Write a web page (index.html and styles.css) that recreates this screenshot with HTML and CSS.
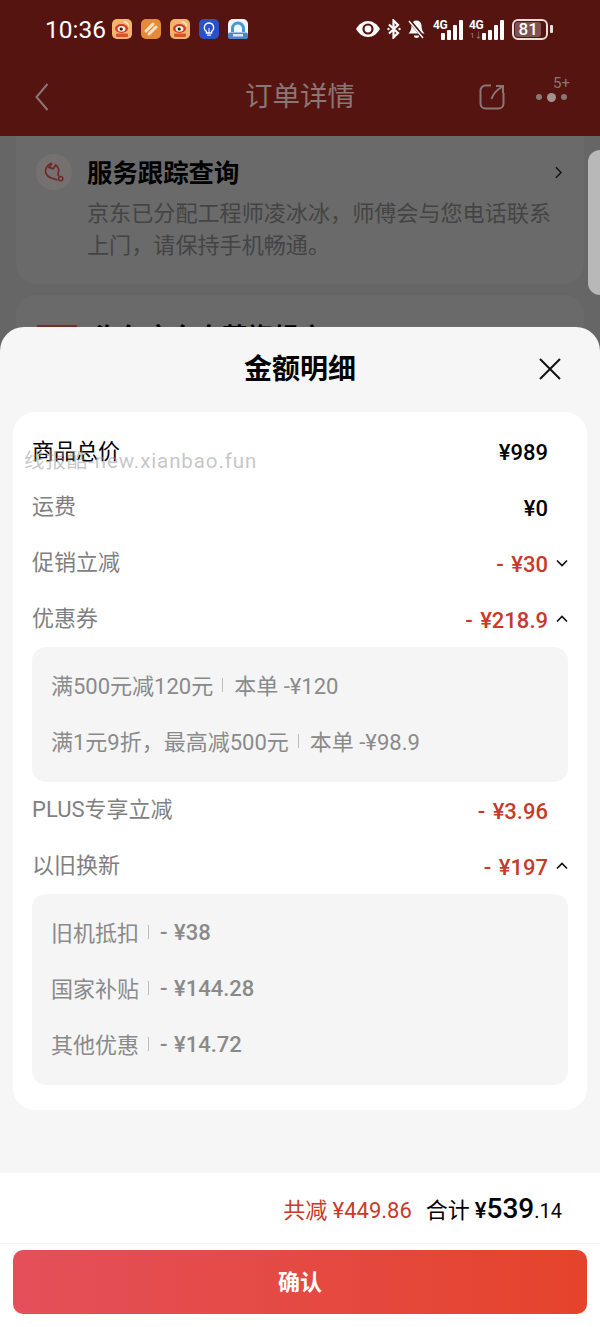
FILE: index.html
```html
<!DOCTYPE html>
<html lang="zh">
<head>
<meta charset="utf-8">
<title>金额明细</title>
<link rel="stylesheet" href="styles.css">
</head>
<body>
<div class="page">
  <header class="topbar">
    <div class="status">
      <span class="time">10:36</span>
      <div class="apps">
        <svg class="app" viewBox="0 0 20 20"><rect width="20" height="20" rx="5" fill="#f3b56c"/><rect x="4" y="14.500" width="12" height="3.500" rx="1" fill="#d9532a"/><ellipse cx="9.500" cy="9.500" rx="6.500" ry="4.400" fill="#d8382a"/><ellipse cx="9.500" cy="9.800" rx="4" ry="2.900" fill="#fbeedd"/><circle cx="9.200" cy="10" r="1.600" fill="#2a1a14"/><path d="M12 3a4.500 4.500 0 0 1 4.500 4.500" fill="none" stroke="#fff3c8" stroke-width="1.300"/></svg>
        <svg class="app" viewBox="0 0 20 20"><rect width="20" height="20" rx="5" fill="#e58a38"/><path d="M5 12 12 5M8 15l7-7" stroke="#fbe3c4" stroke-width="3" stroke-linecap="round" fill="none"/></svg>
        <svg class="app" viewBox="0 0 20 20"><rect width="20" height="20" rx="5" fill="#f3b56c"/><rect x="4" y="14.500" width="12" height="3.500" rx="1" fill="#d9532a"/><ellipse cx="9.500" cy="9.500" rx="6.500" ry="4.400" fill="#d8382a"/><ellipse cx="9.500" cy="9.800" rx="4" ry="2.900" fill="#fbeedd"/><circle cx="9.200" cy="10" r="1.600" fill="#2a1a14"/><path d="M12 3a4.500 4.500 0 0 1 4.500 4.500" fill="none" stroke="#fff3c8" stroke-width="1.300"/></svg>
        <svg class="app" viewBox="0 0 20 20"><rect width="20" height="20" rx="5" fill="#2a52c8"/><path d="M10 4a4.600 4.600 0 0 0-2.600 8.400V14h5.200v-1.600A4.600 4.600 0 0 0 10 4ZM8 16.200h4" fill="none" stroke="#fff" stroke-width="1.300"/><path d="M10 9v5" stroke="#fff" stroke-width="1"/></svg>
        <svg class="app" viewBox="0 0 20 20"><rect width="20" height="20" rx="5" fill="#f2f6fa"/><rect y="13.500" width="20" height="6.500" rx="2" fill="#4f86c8"/><path d="M4.500 13V9.500a5.500 5.500 0 0 1 11 0V13" fill="none" stroke="#3f9ad8" stroke-width="3"/><rect x="5" y="15" width="10" height="2.500" fill="#dbe8f5"/></svg>
      </div>
      <div class="sys">
        <svg class="eye" viewBox="0 0 26 18"><path d="M1 9c3-5 7-8 12-8s9 3 12 8c-3 5-7 8-12 8S4 14 1 9Z" fill="#fff"/><circle cx="13" cy="9" r="5.600" fill="#561410"/><circle cx="13" cy="9" r="3.400" fill="#fff"/></svg>
        <svg class="bt" viewBox="0 0 14 20"><path d="M2 5.500 11 14l-4.500 4.500v-17L11 6l-9 8.500" fill="none" stroke="#fff" stroke-width="2.200"/><circle cx="1.500" cy="10" r="1.200" fill="#fff"/><circle cx="12.500" cy="10" r="1.200" fill="#fff"/></svg>
        <svg class="bell" viewBox="0 0 17 20"><path d="M8.500 1.500a5 5 0 0 0-5 5c0 4-1 6-3 8h16c-2-2-3-4-3-8a5 5 0 0 0-5-5Z" fill="#fff"/><path d="M6 16.500h5a2.500 2.500 0 0 1-5 0Z" fill="#fff"/><path d="M1.500 1.500 15.500 18.500" stroke="#561410" stroke-width="3.500"/><path d="M1 2 15 19" stroke="#fff" stroke-width="1.500"/></svg>
        <div class="net">
          <span class="net-label">4G</span>
          <div class="bars"><i class="b1"></i><i class="b2"></i><i class="b3"></i><i class="b4"></i></div>
        </div>
        <div class="net net-second">
          <span class="net-label">4G</span>
          <span class="net-sim">1↓</span>
          <div class="bars"><i class="b1"></i><i class="b2"></i><i class="b3"></i><i class="b4"></i></div>
        </div>
        <div class="battery"><span class="level">81</span></div>
        <span class="nub"></span>
      </div>
    </div>
    <nav class="nav">
      <svg class="back" viewBox="0 0 14 28"><path d="M12.500 1 1.500 14l11 13" fill="none" stroke="#8a7775" stroke-width="2"/></svg>
      <h1 class="nav-title">订单详情</h1>
      <svg class="share" viewBox="0 0 26 26"><path d="M12 1.500H6.500a5 5 0 0 0-5 5v13a5 5 0 0 0 5 5h13a5 5 0 0 0 5-5V9" fill="none" stroke="#8a7775" stroke-width="2"/><path d="M12.500 15c1.500-5 5-9 11-12.500M17 2h7v7" fill="none" stroke="#8a7775" stroke-width="2"/></svg>
      <div class="more">
        <span class="dot"></span><span class="dot dot-big"></span><span class="dot"></span>
        <span class="more-badge">5+</span>
      </div>
    </nav>
  </header>

  <section class="behind">
    <div class="bg-card">
      <div class="bg-head">
        <span class="bg-icon">
          <svg viewBox="0 0 24 24"><path d="M9.600 1.500C4 2.500.500 9 2.500 14c1 2.500 3 4 5.500 5l8 2.500M18 17c-2-2-1-3-.500-5.500.500-3-1-6-3.500-8L11 8 6 6.500l3.600-5" fill="none" stroke="#6e2a26" stroke-width="2"/><circle cx="20" cy="20" r="2.500" fill="none" stroke="#6e2a26" stroke-width="1.800"/></svg>
        </span>
        <span class="bg-title">服务跟踪查询</span>
        <svg class="bg-arrow" viewBox="0 0 8 14"><path d="M1 1l6 6-6 6" fill="none" stroke="#111" stroke-width="1.600"/></svg>
      </div>
      <p class="bg-desc">京东已分配工程师凌冰冰，师傅会与您电话联系上门，请保持手机畅通。</p>
    </div>
    <div class="bg-card bg-card-two">
      <span class="shop-logo"></span>
      <span class="bg-title shop-name">海尔京东自营旗舰店</span>
    </div>
    <span class="side-tab"></span>
  </section>

  <section class="sheet">
    <div class="sheet-head">
      <h2 class="sheet-title">金额明细</h2>
      <svg class="close" viewBox="0 0 22 22"><path d="M1 1l20 20M21 1 1 21" stroke="#111" stroke-width="2" fill="none"/></svg>
    </div>
    <div class="detail">
      <div class="row"><span class="label label-dark">商品总价</span><span class="val val-dark">¥989</span><span class="slot"></span></div>
      <div class="row"><span class="label">运费</span><span class="val val-dark">¥0</span><span class="slot"></span></div>
      <div class="row"><span class="label">促销立减</span><span class="val val-red">- ¥30</span><span class="slot"><svg class="chev" viewBox="0 0 12 8"><path d="M1 1.500l5 5 5-5" fill="none" stroke="#111" stroke-width="1.700"/></svg></span></div>
      <div class="row"><span class="label">优惠券</span><span class="val val-red">- ¥218.9</span><span class="slot"><svg class="chev" viewBox="0 0 12 8"><path d="M1 6.500l5-5 5 5" fill="none" stroke="#111" stroke-width="1.700"/></svg></span></div>
      <div class="panel panel-two">
        <div class="sub"><span>满500元减120元</span><i class="sep"></i><span>本单 -¥120</span></div>
        <div class="sub"><span>满1元9折，最高减500元</span><i class="sep"></i><span>本单 -¥98.9</span></div>
      </div>
      <div class="row"><span class="label">PLUS专享立减</span><span class="val val-red">- ¥3.96</span><span class="slot"></span></div>
      <div class="row"><span class="label">以旧换新</span><span class="val val-red">- ¥197</span><span class="slot"><svg class="chev" viewBox="0 0 12 8"><path d="M1 6.500l5-5 5 5" fill="none" stroke="#111" stroke-width="1.700"/></svg></span></div>
      <div class="panel panel-three">
        <div class="sub"><span>旧机抵扣</span><i class="sep"></i><span class="amt">- ¥38</span></div>
        <div class="sub"><span>国家补贴</span><i class="sep"></i><span class="amt">- ¥144.28</span></div>
        <div class="sub"><span>其他优惠</span><i class="sep"></i><span class="amt">- ¥14.72</span></div>
      </div>
    </div>
    <footer class="foot">
      <div class="sum">
        <span class="sum-red">共减 ¥449.86</span>
        <span class="sum-total">合计 <span class="yen">¥</span><b class="int">539</b><span class="dec">.14</span></span>
      </div>
      <div class="action"><button class="confirm" type="button">确认</button></div>
    </footer>
  </section>
  <span class="watermark">线报酷-new.xianbao.fun</span>
</div>
</body>
</html>
```
FILE: styles.css
```css
* { box-sizing: border-box; }
html, body { margin: 0; padding: 0; }
body { font-family: Roboto, "Noto Sans CJK SC", sans-serif; }
.page { position: relative; width: 600px; height: 1327px; overflow: hidden; background: #666; }

.topbar { height: 136px; background: #561410; display: flex; flex-direction: column; }
.status { height: 58px; display: flex; align-items: center; padding: 0 47px 0 45px; color: #fff; }
.time { font-size: 24.500px; width: 67px; }
.apps { display: flex; gap: 9px; }
.app { width: 20px; height: 20px; display: block; }
.sys { margin-left: auto; display: flex; align-items: center; }
.eye { width: 26px; height: 18px; margin-right: 6px; }
.bt { width: 14px; height: 20px; margin-right: 7px; }
.bell { width: 17px; height: 20px; margin-right: 8px; }
.net { width: 30px; height: 21px; position: relative; margin-right: 6px; }
.net-second { width: 35px; margin-right: 8px; }
.net-label { position: absolute; left: 0; top: 0; font-size: 12px; line-height: 12px; font-weight: 700; letter-spacing: -.5px; }
.net-sim { position: absolute; left: 1px; bottom: 0; font-size: 8px; line-height: 8px; color: #a8807c; }
.bars { position: absolute; right: 0; bottom: 0; display: flex; align-items: flex-end; gap: 2px; }
.bars i { display: block; width: 4px; background: #fff; border-radius: 1px; }
.bars .b1 { height: 7px; }
.bars .b2 { height: 10px; }
.bars .b3 { height: 15px; }
.bars .b4 { height: 20px; }
.battery { width: 36px; height: 21px; border: 2px solid #e9dcda; border-radius: 6px; padding: 1px; }
.level { display: block; height: 100%; width: 88%; background: #7c5452; border-radius: 3px; font-size: 17px; line-height: 15px; font-weight: 500; text-align: center; color: #fff; }
.nub { width: 3px; height: 8px; background: #e9dcda; margin-left: 2px; border-radius: 1px; }

.nav { flex: 1; position: relative; display: flex; align-items: center; padding: 0 33px 0 35px; }
.back { width: 14px; height: 28px; }
.nav-title { position: absolute; left: 0; right: 0; top: 19px; margin: 0; text-align: center; font-size: 27.500px; line-height: 40px; font-weight: 400; color: #8a7775; }
.share { width: 26px; height: 26px; margin-left: auto; margin-right: 31px; }
.more { position: relative; display: flex; align-items: center; gap: 5px; }
.dot { width: 6px; height: 6px; border-radius: 50%; background: #8a7775; }
.dot-big { width: 9px; height: 9px; background: #a3928f; }
.more-badge { position: absolute; right: -3px; top: -19px; font-size: 15px; line-height: 18px; color: #8a7775; }

.behind { position: relative; padding: 0 16px; }
.bg-card { background: #6a6a6a; border-radius: 0 0 20px 20px; height: 148px; padding: 18px 20px 0; }
.bg-head { display: flex; align-items: center; height: 36px; }
.bg-icon { width: 36px; height: 36px; border-radius: 50%; background: #767170; margin-right: 15px; display: flex; align-items: center; justify-content: center; }
.bg-icon svg { width: 20px; height: 20px; }
.bg-title { font-size: 25.400px; font-weight: 700; color: #000; line-height: 36px; position: relative; top: 1px; }
.bg-arrow { width: 7px; height: 13px; margin-left: auto; margin-right: 2px; }
.bg-desc { margin: 7px 8px 0 51px; font-size: 22.100px; line-height: 32px; color: #444; }
.bg-card-two { margin-top: 11px; height: 120px; border-radius: 20px; display: flex; align-items: flex-start; padding: 30px 20px 0 21px; gap: 18px; }
.shop-logo { width: 40px; height: 30px; background: #7c2a25; }
.shop-name { margin-top: -7px; }
.side-tab { position: absolute; right: 0; top: 14px; width: 12px; height: 145px; background: #b8b8b8; border-radius: 12px 0 0 12px; }

.sheet { position: absolute; left: 0; right: 0; top: 327px; bottom: 0; background: #f6f6f6; border-radius: 24px 24px 0 0; display: flex; flex-direction: column; overflow: hidden; }
.sheet-head { height: 85px; position: relative; display: flex; align-items: center; justify-content: center; }
.sheet-title { margin: 0; font-size: 28px; font-weight: 700; line-height: 40px; color: #000; }
.close { position: absolute; right: 39px; top: 31px; width: 22px; height: 22px; }

.detail { margin: 0 13px; height: 698px; background: #fff; border-radius: 22px; padding: 11px 19px 25px; }
.row { height: 56px; display: flex; align-items: center; }
.label { font-size: 22px; color: #7f7f7f; margin-right: auto; position: relative; top: -3px; }
.label-dark { color: #000; top: -2px; }
.val { font-size: 22px; font-weight: 500; position: relative; top: 1px; }
.val-dark { color: #000; }
.val-red { color: #c8392b; word-spacing: 2px; }
.slot { width: 20px; display: flex; justify-content: flex-end; }
.chev { width: 12px; height: 8px; }

.panel { background: #f5f5f5; border-radius: 14px; padding: 9px 20px 0 19px; }
.panel-two { height: 135px; }
.panel-three { height: 191px; }
.sub { height: 56px; display: flex; align-items: center; font-size: 22px; color: #8a8a8a; }
.sep { width: 1px; height: 14px; background: #bdbdbd; margin: 0 11px 0 9px; position: relative; top: 1px; }
.amt { font-weight: 500; word-spacing: 1px; position: relative; top: 1px; }

.foot { margin-top: 63px; background: #fff; flex: 1; display: flex; flex-direction: column; }
.sum { height: 71px; border-bottom: 1px solid #f3f3f3; display: flex; align-items: center; justify-content: flex-end; padding: 0 38px 0 0; gap: 14px; }
.sum-red { font-size: 22px; color: #c8392b; }
.sum-total { font-size: 22px; color: #000; display: flex; align-items: baseline; }
.yen { margin-left: 5px; font-weight: 500; }
.int { font-size: 28px; font-weight: 500; }
.dec { font-size: 20px; }
.action { padding: 6px 13px 0; }
.confirm { display: block; width: 100%; height: 64px; border: 0; border-radius: 10px; background: linear-gradient(90deg, #e4505a, #e5432b); color: #fff; font: 700 22px Roboto, "Noto Sans CJK SC", sans-serif; padding: 0 0 5px; }

.watermark { position: absolute; left: 24px; top: 448px; font-size: 20.500px; line-height: 26px; letter-spacing: .9px; color: rgba(150,150,150,.55); white-space: nowrap; }
```
